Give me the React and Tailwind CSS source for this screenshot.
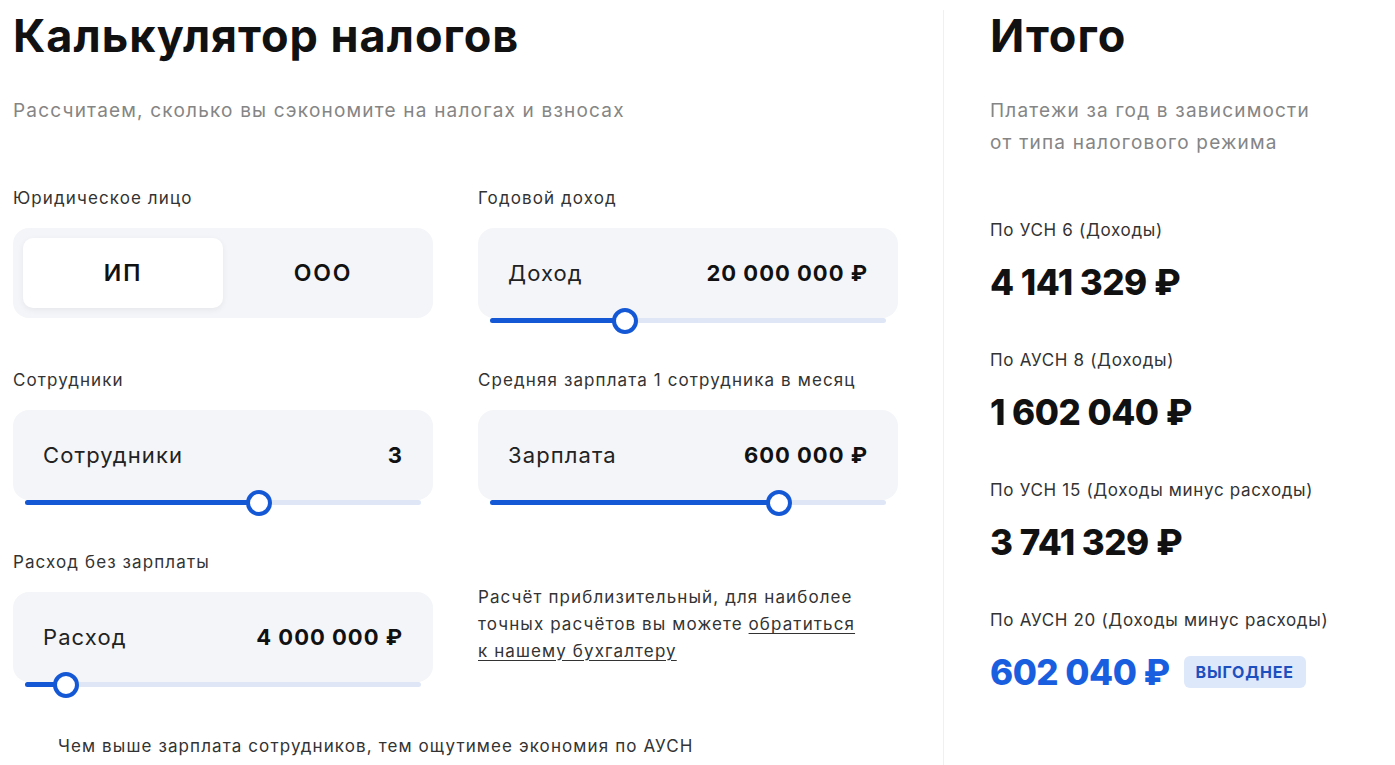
import React from 'react';

const FONT = { fontFamily: 'Inter, "Noto Sans", sans-serif' };

/* ── Slider under a card ── */
function Slider({ pct }) {
  return (
    <div className="absolute left-[12px] right-[12px] bottom-[-5px] h-[5px] rounded-full bg-[#dfe7f7]">
      <div className="absolute left-0 top-0 h-full rounded-full bg-[#1558d6]" style={{ width: `${pct}%` }} />
      <div
        className="absolute top-1/2 w-[26px] h-[26px] -translate-x-1/2 -translate-y-1/2 rounded-full border-[4px] border-[#1558d6] bg-white"
        style={{ left: `${pct}%` }}
      />
    </div>
  );
}

function Label({ children }) {
  return <div className="h-[20px] leading-[20px] text-[17px] tracking-[0.065em] text-[#333] mb-[20px]">{children}</div>;
}

function Field({ label, name, value, pct }) {
  return (
    <div>
      <Label>{label}</Label>
      <div className="relative h-[90px] rounded-[16px] bg-[#f4f5f8] flex items-center justify-between px-[30px]">
        <span className="text-[22px] tracking-[0.05em] text-[#222]">{name}</span>
        <span className="text-[22px] font-bold tracking-[0.045em] text-[#111]">{value}</span>
        <Slider pct={pct} />
      </div>
    </div>
  );
}

const RESULTS = [
  { label: 'По УСН 6 (Доходы)', value: '4 141 329 ₽' },
  { label: 'По АУСН 8 (Доходы)', value: '1 602 040 ₽' },
  { label: 'По УСН 15 (Доходы минус расходы)', value: '3 741 329 ₽' },
  { label: 'По АУСН 20 (Доходы минус расходы)', value: '602 040 ₽', best: true },
];

export default function App() {
  return (
    <div className="flex bg-white min-h-[765px] text-[#111]" style={FONT}>
      {/* Calculator */}
      <div className="w-[943px] pl-[13px] pt-[13px]">
        <h1 className="text-[45px] leading-[46px] font-bold tracking-[1px]">Калькулятор налогов</h1>
        <p className="mt-[40px] text-[19px] leading-[24px] tracking-[0.063em] text-[#858585]">
          Рассчитаем, сколько вы сэкономите на налогах и взносах
        </p>

        <div className="mt-[65px] grid grid-cols-[420px_420px] gap-x-[45px] gap-y-[52px]">
          <div>
            <Label>Юридическое лицо</Label>
            <div className="h-[90px] rounded-[16px] bg-[#f4f5f8] p-[10px] flex">
              <div className="flex-1 rounded-[10px] bg-white shadow-[0_2px_6px_rgba(0,0,0,0.06)] flex items-center justify-center text-[23px] font-semibold tracking-[0.08em]">
                ИП
              </div>
              <div className="flex-1 flex items-center justify-center text-[23px] font-semibold tracking-[0.08em]">ООО</div>
            </div>
          </div>

          <Field label="Годовой доход" name="Доход" value="20 000 000 ₽" pct={34} />
          <Field label="Сотрудники" name="Сотрудники" value="3" pct={59} />
          <Field label="Средняя зарплата 1 сотрудника в месяц" name="Зарплата" value="600 000 ₽" pct={73} />
          <Field label="Расход без зарплаты" name="Расход" value="4 000 000 ₽" pct={10.4} />

          <p className="pt-[32px] text-[17px] leading-[27px] tracking-[0.065em] text-[#333]">
            Расчёт приблизительный, для наиболее
            <br />
            точных расчётов вы можете{' '}
            <a href="#" className="underline underline-offset-[3px]">обратиться</a>
            <br />
            <a href="#" className="underline underline-offset-[3px]">к нашему бухгалтеру</a>
          </p>
        </div>

        <p className="mt-[52px] pl-[45px] text-[17px] leading-[24px] tracking-[0.065em] text-[#333]">
          Чем выше зарплата сотрудников, тем ощутимее экономия по АУСН
        </p>
      </div>

      {/* Totals */}
      <div className="mt-[10px] flex-1 border-l border-[#f0f0f0] pl-[46px] pt-[3px]">
        <h2 className="text-[45px] leading-[46px] font-bold tracking-[1px]">Итого</h2>
        <p className="mt-[36px] text-[19px] leading-[32px] tracking-[0.063em] text-[#858585]">
          Платежи за год в зависимости
          <br />
          от типа налогового режима
        </p>

        <div className="mt-[61px] flex flex-col gap-[48px]">
          {RESULTS.map((r) => (
            <div key={r.label}>
              <div className="text-[17px] leading-[20px] tracking-[0.04em] text-[#333]">{r.label}</div>
              <div className="mt-[22px] flex items-center gap-[14px]">
                <span className={`text-[35px] leading-[40px] font-extrabold tracking-[-0.5px] ${r.best ? 'text-[#1a5ee0]' : 'text-[#111]'}`}>
                  {r.value}
                </span>
                {r.best && (
                  <span className="rounded-[6px] bg-[#dde8fb] px-[12px] py-[6px] text-[16px] leading-[20px] font-bold tracking-[0.05em] text-[#1d4fbf]">
                    ВЫГОДНЕЕ
                  </span>
                )}
              </div>
            </div>
          ))}
        </div>
      </div>
    </div>
  );
}
